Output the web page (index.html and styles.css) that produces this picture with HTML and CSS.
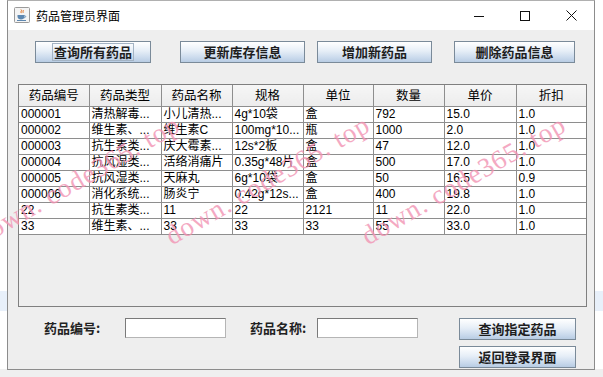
FILE: index.html
```html
<!DOCTYPE html>
<html lang="zh">

<head>
    <meta charset="UTF-8">
    <title>药品管理员界面</title>
    <link rel="stylesheet" href="styles.css">
</head>

<body>
    <div class="window">

        <!-- title bar -->
        <div class="titlebar">
            <svg class="app-icon" width="16" height="16" viewBox="0 0 16 16">
                <rect x="0.5" y="0.5" width="15" height="15" rx="1" fill="#f4f4f4" stroke="#9a9a9a"/>
                <path d="M7 2.5c1.5 1.2-1 2 0.3 3.6M9 3c1 1-0.8 1.6 0.2 2.8" fill="none" stroke="#e07020" stroke-width="1"/>
                <path d="M3.5 8h7v1.5c0 2-1.5 3-3.5 3s-3.5-1-3.5-3z" fill="#5d87b0"/>
                <path d="M10.5 8.6c1.6 0 1.6 2-0.4 2.2" fill="none" stroke="#5d87b0" stroke-width="0.9"/>
                <path d="M3 13.5h9" stroke="#5d87b0" stroke-width="1"/>
            </svg>
            <span class="title">药品管理员界面</span>
            <div class="controls">
                <span class="ctl">
                    <svg width="10" height="10" viewBox="0 0 10 10"><path d="M0 5.5h10" stroke="#111" stroke-width="1"/></svg>
                </span>
                <span class="ctl">
                    <svg width="10" height="10" viewBox="0 0 10 10"><rect x="0.5" y="0.5" width="9" height="9" fill="none" stroke="#111" stroke-width="1"/></svg>
                </span>
                <span class="ctl">
                    <svg width="11" height="11" viewBox="0 0 11 11"><path d="M0.5 0.5l10 10M10.5 0.5l-10 10" stroke="#111" stroke-width="1"/></svg>
                </span>
            </div>
        </div>

        <div class="content">

            <!-- top buttons -->
            <div class="toolbar">
                <button class="btn btn-all"><span class="focus">查询所有药品</span></button>
                <button class="btn btn-update">更新库存信息</button>
                <button class="btn btn-add">增加新药品</button>
                <button class="btn btn-delete">删除药品信息</button>
            </div>

            <!-- drug table -->
            <div class="scroll-pane">
                <table class="grid">
                    <colgroup>
                        <col style="width: 70px">
                        <col style="width: 72px">
                        <col style="width: 71px">
                        <col style="width: 71px">
                        <col style="width: 70px">
                        <col style="width: 71px">
                        <col style="width: 72px">
                        <col style="width: 70px">
                    </colgroup>
                    <thead>
                        <tr>
                            <th>药品编号</th>
                            <th>药品类型</th>
                            <th>药品名称</th>
                            <th>规格</th>
                            <th>单位</th>
                            <th>数量</th>
                            <th>单价</th>
                            <th>折扣</th>
                        </tr>
                    </thead>
                    <tbody>
                        <tr><td>000001</td><td>清热解毒...</td><td>小儿清热...</td><td>4g*10袋</td><td>盒</td><td>792</td><td>15.0</td><td>1.0</td></tr>
                        <tr><td>000002</td><td>维生素、...</td><td>维生素C</td><td>100mg*10...</td><td>瓶</td><td>1000</td><td>2.0</td><td>1.0</td></tr>
                        <tr><td>000003</td><td>抗生素类...</td><td>庆大霉素...</td><td>12s*2板</td><td>盒</td><td>47</td><td>12.0</td><td>1.0</td></tr>
                        <tr><td>000004</td><td>抗风湿类...</td><td>活络消痛片</td><td>0.35g*48片</td><td>盒</td><td>500</td><td>17.0</td><td>1.0</td></tr>
                        <tr><td>000005</td><td>抗风湿类...</td><td>天麻丸</td><td>6g*10袋</td><td>盒</td><td>50</td><td>16.5</td><td>0.9</td></tr>
                        <tr><td>000006</td><td>消化系统...</td><td>肠炎宁</td><td>0.42g*12s...</td><td>盒</td><td>400</td><td>19.8</td><td>1.0</td></tr>
                        <tr><td>22</td><td>抗生素类...</td><td>11</td><td>22</td><td>2121</td><td>11</td><td>22.0</td><td>1.0</td></tr>
                        <tr><td>33</td><td>维生素、...</td><td>33</td><td>33</td><td>33</td><td>55</td><td>33.0</td><td>1.0</td></tr>
                    </tbody>
                </table>
            </div>

            <!-- search by id / name -->
            <div class="search">
                <label class="lbl lbl-id">药品编号:</label>
                <input class="field" type="text">
                <label class="lbl lbl-name">药品名称:</label>
                <input class="field" type="text">
                <div class="search-buttons">
                    <button class="btn btn-wide">查询指定药品</button>
                    <button class="btn btn-wide">返回登录界面</button>
                </div>
            </div>
        </div>
    </div>

    <!-- site watermark over the screenshot -->
    <span class="mark mark-1">down. code365. top</span>
    <span class="mark mark-2">down. code365. top</span>
    <span class="mark mark-3">down. code365. top</span>
</body>

</html>
```

FILE: styles.css
```css
body {
    margin: 0;
    width: 603px;
    height: 377px;
    overflow: hidden;
    position: relative;
    font-family: "Liberation Sans", "Noto Sans CJK SC", sans-serif;
    background: linear-gradient(to bottom, #ffffff 0, #ffffff 291px, #e8f0fa 291px, #e8f0fa 311px, #ffffff 311px, #ffffff 369px, #efefef 369px);
}

.window {
    margin-left: 7px;
    width: 588px;
    height: 370px;
    box-sizing: border-box;
    border: 1px solid #8c8c8c;
    border-top-color: #b0b0b0;
    display: flex;
    flex-direction: column;
}

/* title bar */
.titlebar {
    height: 29px;
    background-color: #ffffff;
    display: flex;
    align-items: center;
}

.app-icon {
    margin-left: 6px;
    margin-top: -1px;
}

.title {
    margin-left: 6px;
    font-size: 12px;
    color: #000000;
    font-family: "Noto Sans CJK SC", sans-serif;
    line-height: 14px;
}

.controls {
    margin-left: auto;
    display: flex;
    height: 29px;
}

.ctl {
    width: 46px;
    display: flex;
    justify-content: center;
    align-items: center;
}

/* client area */
.content {
    flex: 1;
    background-color: #eeeeee;
}

.toolbar {
    display: flex;
    margin-top: 11px;
    padding-left: 27px;
}

.btn {
    height: 22px;
    padding: 0;
    box-sizing: border-box;
    border: 1px solid #7a8a99;
    background: linear-gradient(to bottom, #ffffff 0%, #e6eef7 45%, #c9d9ec 80%, #b8cce3 100%);
    font-family: "Noto Sans CJK SC", sans-serif;
    font-weight: bold;
    font-size: 13px;
    line-height: 16px;
    color: #1e1e1e;
    display: flex;
    justify-content: center;
    align-items: center;
}

.btn-all {
    width: 116px;
}

.btn-update {
    width: 125px;
    margin-left: 29px;
}

.btn-add {
    width: 115px;
    margin-left: 12px;
}

.btn-delete {
    width: 121px;
    margin-left: 22px;
}

.focus {
    outline: 1px solid #a3b3c4;
    padding: 0 1px;
    line-height: 16px;
}

/* table */
.scroll-pane {
    margin-top: 21px;
    margin-left: 10px;
    width: 569px;
    height: 223px;
    box-sizing: border-box;
    border: 1px solid #7f7f7f;
    background-color: #eeeeee;
}

.grid {
    border-collapse: collapse;
    table-layout: fixed;
    width: 567px;
    font-size: 12px;
    color: #000000;
}

.grid th {
    height: 21px;
    padding: 0;
    font-weight: normal;
    font-size: 12.5px;
    text-align: center;
    background: linear-gradient(to bottom, #f6f6f6, #ececec);
    border-right: 1px solid #8e8e8e;
    border-bottom: 1px solid #8e8e8e;
    line-height: 20px;
}

.grid td {
    height: 15px;
    padding: 0 0 0 2px;
    background-color: #ffffff;
    border-right: 1px solid #8e8e8e;
    border-bottom: 1px solid #8e8e8e;
    line-height: 15px;
    white-space: nowrap;
    overflow: hidden;
}

.grid th:last-child,
.grid td:last-child {
    border-right: none;
}

/* search row */
.search {
    display: flex;
    align-items: flex-start;
    margin-top: 11px;
    padding-left: 36px;
}

.lbl {
    height: 20px;
    line-height: 20px;
    font-family: "Noto Sans CJK SC", sans-serif;
    font-weight: bold;
    font-size: 13px;
    color: #222222;
}

.lbl-id {
    width: 81px;
}

.lbl-name {
    width: 67px;
    margin-left: 24px;
}

.field {
    width: 101px;
    height: 20px;
    box-sizing: border-box;
    margin: 0;
    border: 1px solid #7a7a7a;
    border-bottom-color: #b5b5b5;
    border-right-color: #b5b5b5;
    background-color: #ffffff;
    padding: 0 2px;
}

.search-buttons {
    margin-left: 41px;
    display: flex;
    flex-direction: column;
    gap: 6px;
}

.btn-wide {
    width: 117px;
}

/* watermark */
.mark {
    position: absolute;
    top: 224px;
    font-family: "Liberation Serif", serif;
    font-size: 27px;
    letter-spacing: 1px;
    color: #f294b4;
    opacity: 0.8;
    white-space: nowrap;
    transform: rotate(-30deg);
    transform-origin: left bottom;
    line-height: 25px;
}

.mark-1 {
    left: -16px;
}

.mark-2 {
    left: 174px;
}

.mark-3 {
    left: 370px;
}
```
